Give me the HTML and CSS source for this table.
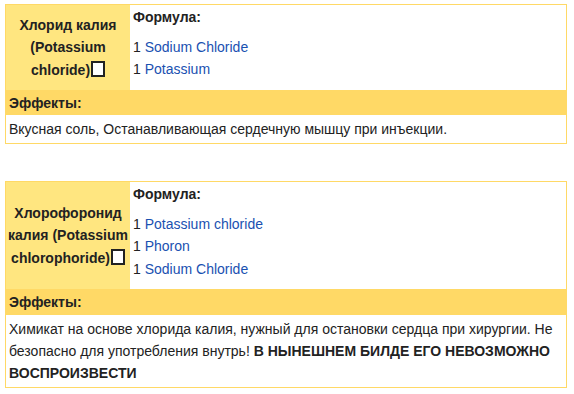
FILE: index.html
```html
<!DOCTYPE html>
<html lang="ru">
<head>
    <meta charset="UTF-8">
    <meta name="viewport" content="width=device-width, initial-scale=1.0">
    <title>Химикаты</title>
    <link rel="stylesheet" href="styles.css">
</head>
<body>
    <table class="chem">
        <tr>
            <th class="chem-name">Хлорид калия (Potassium chloride)<span class="tofu"></span></th>
            <td class="chem-recipe">
                <div class="recipe-title">Формула:</div>
                <div>1 <a href="#">Sodium Chloride</a></div>
                <div>1 <a href="#">Potassium</a></div>
            </td>
        </tr>
        <tr>
            <td class="chem-head" colspan="2">Эффекты:</td>
        </tr>
        <tr>
            <td class="chem-desc" colspan="2">Вкусная соль, Останавливающая сердечную мышцу при инъекции.</td>
        </tr>
    </table>

    <table class="chem">
        <tr>
            <th class="chem-name">Хлорофоронид калия (Potassium chlorophoride)<span class="tofu"></span></th>
            <td class="chem-recipe">
                <div class="recipe-title">Формула:</div>
                <div>1 <a href="#">Potassium chloride</a></div>
                <div>1 <a href="#">Phoron</a></div>
                <div>1 <a href="#">Sodium Chloride</a></div>
            </td>
        </tr>
        <tr>
            <td class="chem-head" colspan="2">Эффекты:</td>
        </tr>
        <tr>
            <td class="chem-desc" colspan="2">Химикат на основе хлорида калия, нужный для остановки сердца при хирургии. Не безопасно для употребления внутрь! <b>В НЫНЕШНЕМ БИЛДЕ ЕГО НЕВОЗМОЖНО ВОСПРОИЗВЕСТИ</b></td>
        </tr>
    </table>
</body>
</html>
```

FILE: styles.css
```css
body {
    margin: 4px 7px 0 5px;
    background-color: #fff;
    color: #222;
    font-family: "Liberation Sans", Arial, sans-serif;
    font-size: 14px;
    line-height: 22.5px;
}
.chem {
    width: 562px;
    margin-bottom: 37px;
    border: 1px solid #ffd966;
    border-collapse: collapse;
    border-spacing: 0;
}
.chem:last-child {
    margin-bottom: 0;
}
.chem th, .chem td {
    padding: 0;
}
.chem .chem-name {
    width: 122px;
    padding: 2px 1px;
    background-color: #ffe680;
    font-weight: bold;
    text-align: center;
    vertical-align: middle;
}
.tofu {
    display: inline-block;
    width: 10px;
    height: 12px;
    margin-left: 1px;
    border: 2px solid #222;
    vertical-align: -2px;
    background-color: #fff;
}
.chem .chem-recipe {
    padding: 1px 3px 9px;
    vertical-align: top;
    background-color: #fff;
}
.recipe-title {
    font-weight: bold;
    margin-bottom: 7px;
}
.chem-recipe a {
    color: #1a51b1;
    text-decoration: none;
}
.chem .chem-head {
    padding: 2px 3px 1px;
    background-color: #ffd966;
    font-weight: bold;
}
.chem .chem-desc {
    padding: 3px 3px 3px;
    line-height: 22px;
    background-color: #fff;
}
```
